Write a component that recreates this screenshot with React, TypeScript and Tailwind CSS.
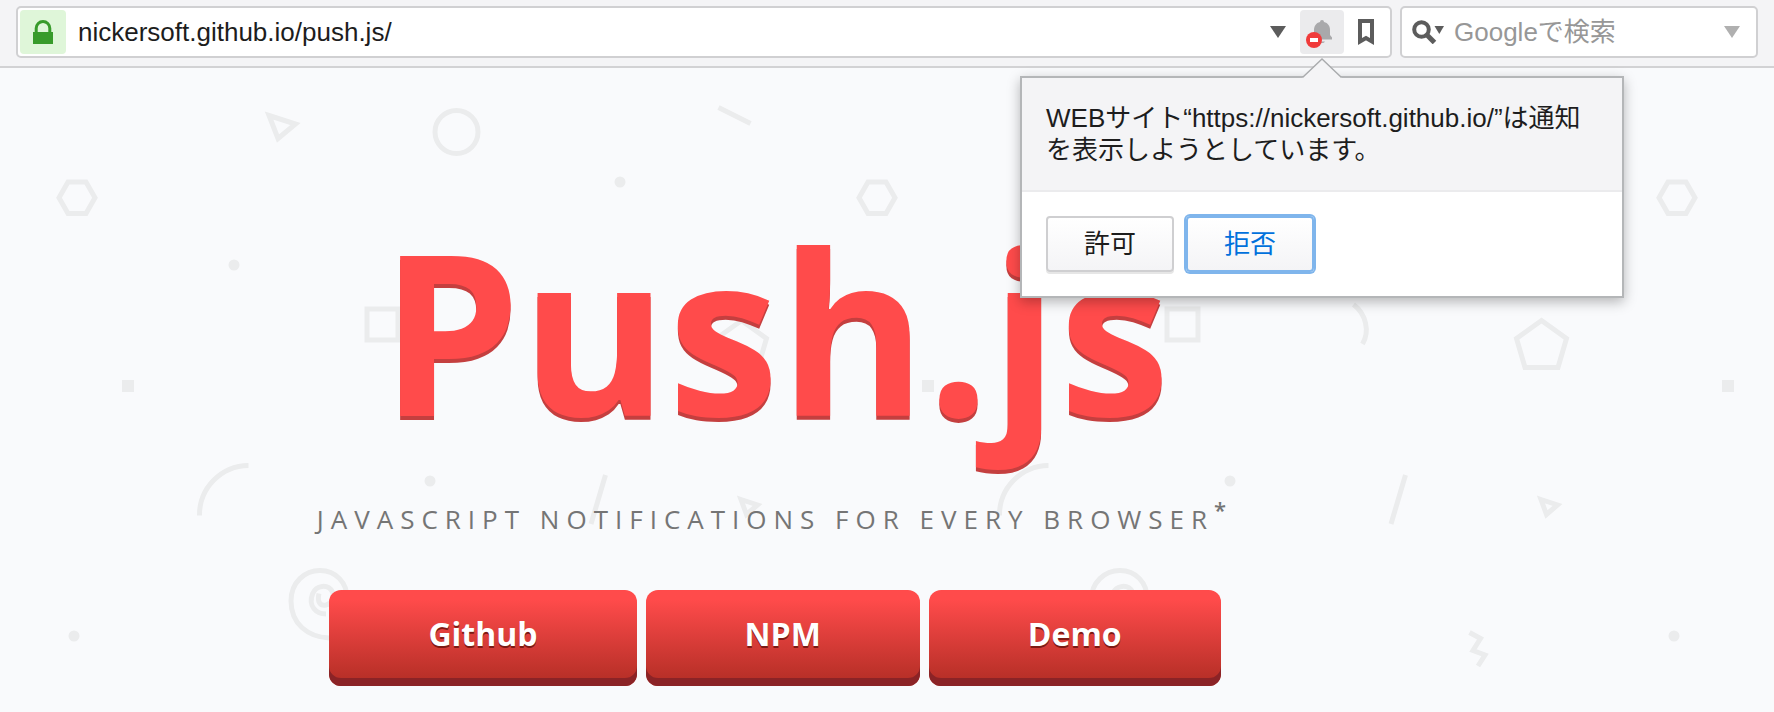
import React from "react";

const uiFont = "font-['Liberation_Sans','Noto_Sans_CJK_JP',sans-serif]";

function Backdrop() {
  return (
    <svg className="absolute inset-0 h-full w-full" aria-hidden="true">
      <defs>
        <pattern id="confetti" width="800" height="800" patternUnits="userSpaceOnUse">
          <g fill="none" stroke="#ebeced" strokeWidth="5">
            <path d="M269 47.500L295.500 56L278 70.500Z" />
            <circle cx="456.500" cy="64" r="21.500" />
            <path d="M59 129.700L68 114H86L95 129.700L86 145.500H68Z" />
            <path d="M718.500 39.500L750.500 55.500" />
            <rect x="367" y="241" width="31" height="31" />
            <path d="M741.500 252.500L766.500 270.500L758 299.500H725L716.500 270.500Z" />
            <path d="M553.500 236.500C566 246 570 263 562.500 276" />
            <path d="M605.500 407L591 456" />
            <path d="M741 431.500L757.500 437L746.500 446.500Z" />
            <path d="M248.500 397.500A49.500 49.500 0 0 0 199.500 447.500" />
            <path d="M669.500 564.500L680.500 570.500L673 582.500L685 587L678 598" />
            <path d="M319 525.500C317 534 320 538 326 537C333 535.500 335 529 332.500 524C328 515.500 316 517 312.500 526C308 538 316 546 326 546M329 570C308 569 291 556 291 533C291 514 305 502.500 320 502.500C336 502.500 347 515 347 530" />
          </g>
          <g fill="#ebeced">
            <circle cx="234" cy="197" r="5.500" />
            <circle cx="620" cy="114" r="5.500" />
            <circle cx="430" cy="413" r="5.500" />
            <circle cx="74" cy="568" r="5.500" />
            <rect x="122" y="312" width="12" height="12" />
          </g>
        </pattern>
      </defs>
      <rect width="100%" height="100%" fill="url(#confetti)" />
    </svg>
  );
}

function Caret({ className }: { className: string }) {
  return (
    <svg viewBox="0 0 16 12" className={className} aria-hidden="true">
      <path d="M0 0H16L8 12Z" fill="currentColor" />
    </svg>
  );
}

function PermissionPopup() {
  return (
    <div
      role="dialog"
      aria-label="通知の許可"
      className="absolute top-full left-1/2 mt-[22px] w-[604px] -translate-x-1/2 border-2 border-[#b4b6b8] bg-white text-[26px] text-[#1d1d1d] shadow-[0_4px_12px_rgba(0,0,0,0.28)]"
    >
      <svg viewBox="0 0 40 20" className="absolute bottom-full left-1/2 h-5 w-10 -translate-x-1/2" aria-hidden="true">
        <path d="M0 20L20 1L40 20Z" fill="#f4f4f6" />
        <path d="M0.500 19.500L20 1L39.500 19.500" fill="none" stroke="#a9abad" strokeWidth="1.400" />
      </svg>
      <p className="border-b-2 border-[#ebebed] bg-[#f4f4f6] px-6 pt-6 pb-6 leading-8">
        WEBサイト“https://nickersoft.github.io/”は通知を表示しようとしています。
      </p>
      <div className="flex gap-3 px-6 py-6">
        <button
          type="button"
          className="h-14 w-32 rounded-[4px] border-2 border-[#cfcfd1] bg-linear-to-b from-white to-[#f4f4f6] shadow-[0_2px_0_#e6e6e6]"
        >
          許可
        </button>
        <button
          type="button"
          className="h-14 w-32 rounded-[4px] border-2 border-[#7fb5ec] bg-linear-to-b from-white to-[#f4f4f6] text-[#0071dc] ring-2 ring-[#7fb5ec]"
        >
          拒否
        </button>
      </div>
    </div>
  );
}

function BrowserBar() {
  return (
    <header className={`relative z-10 flex gap-2 border-b-2 border-[#d2d2d4] bg-[#f4f4f6] px-4 pt-[6px] pb-2 ${uiFont}`}>
      <div className="flex h-[52px] flex-1 items-center rounded-[5px] border-2 border-[#d0d0d2] bg-white px-[2px]">
        <span className="flex h-11 w-[46px] items-center justify-center rounded-[4px] bg-[#dff6d9]">
          <svg viewBox="0 0 20 24" className="h-6 w-5" aria-hidden="true">
            <path d="M0 12H20V24H0Z" fill="#389b2b" />
            <path d="M3.200 13V8.300a6.800 6.800 0 0 1 13.600 0V13" fill="none" stroke="#389b2b" strokeWidth="3" />
          </svg>
        </span>
        <input
          aria-label="アドレス"
          defaultValue="nickersoft.github.io/push.js/"
          className="ml-3 min-w-0 flex-1 bg-transparent text-[26px] text-[#1d1d1d] outline-none"
        />
        <button type="button" aria-label="履歴" className="flex h-11 w-11 items-center justify-center text-[#5c5c5c]">
          <Caret className="h-3 w-4" />
        </button>
        <div className="relative">
          <button type="button" aria-label="通知" className="flex h-11 w-11 items-center justify-center rounded-[4px] bg-[#ebebed]">
            <svg viewBox="0 0 30 30" className="h-[30px] w-[30px] overflow-visible" aria-hidden="true">
              <path d="M13 5a2 2 0 0 1 4 0C21 6 23 9 23 13V18L25 20.500V22.500H5V20.500L7 18V13C7 9 9 6 13 5Z" fill="#a9a9ab" />
              <path d="M12.500 24.500H18A3 2.500 0 0 1 12.500 24.500Z" fill="#a9a9ab" />
              <circle cx="7" cy="23" r="8" fill="#f03a3a" />
              <path d="M3 21h8v4h-8z" fill="#fff" />
            </svg>
          </button>
          <PermissionPopup />
        </div>
        <button type="button" aria-label="ブックマーク" className="flex h-11 w-11 items-center justify-center">
          <svg viewBox="0 0 16 26" className="h-[26px] w-4" aria-hidden="true">
            <path d="M2 2H14V22.500L8 19L2 22.500Z" fill="none" stroke="#5c5c5c" strokeWidth="4" />
          </svg>
        </button>
      </div>
      <div className="flex h-[52px] w-[358px] items-center rounded-[5px] border-2 border-[#d0d0d2] bg-white">
        <button type="button" aria-label="検索エンジン" className="ml-[10px] flex h-11 w-8 items-center text-[#5c5c5c]">
          <svg viewBox="0 0 32 24" className="h-6 w-8" aria-hidden="true">
            <circle cx="9.500" cy="9.500" r="7.300" fill="none" stroke="currentColor" strokeWidth="4" />
            <path d="M14.500 14.500L22.500 22.500" stroke="currentColor" strokeWidth="5" />
            <path d="M22.500 6H32L27.300 14Z" fill="currentColor" />
          </svg>
        </button>
        <input
          aria-label="検索"
          placeholder="Googleで検索"
          className="ml-[10px] min-w-0 flex-1 bg-transparent text-[26px] outline-none placeholder:text-[#979797]"
        />
        <button type="button" aria-label="検索オプション" className="flex h-11 w-12 items-center justify-center text-[#b0b0b0]">
          <Caret className="h-3 w-4" />
        </button>
      </div>
    </header>
  );
}

const links = ["Github", "NPM", "Demo"];

export default function App() {
  return (
    <div className="flex min-h-screen flex-col bg-[#f9fafc]">
      <BrowserBar />
      <main className="relative flex-1 overflow-hidden font-['Open_Sans',sans-serif]">
        <Backdrop />
        <div className="relative mr-56 flex flex-col items-center pt-[122px] pb-5">
          <h1 className="text-[224px] leading-[280px] font-bold text-[#ff4b4b] [text-shadow:0_4px_0_#c43f3f]">Push.js</h1>
          <p className="mt-[18px] text-[26px] leading-[62px] tracking-[7px] text-[#757575] uppercase">
            Javascript notifications for every browser<sup className="text-[22px] font-semibold">*</sup>
          </p>
          <nav className="mt-10 flex gap-[9px]">
            {links.map((label) => (
              <a
                key={label}
                href="#"
                className="rounded-xl bg-linear-to-b from-[#ff4b4b] from-10% to-[#b12d24] px-[99px] pt-[22px] pb-[30px] text-[32px] leading-[44px] font-bold text-white shadow-[inset_0_-8px_0_#8b2326] [text-shadow:0_2px_0_#7d1a14]"
              >
                {label}
              </a>
            ))}
          </nav>
        </div>
      </main>
    </div>
  );
}
